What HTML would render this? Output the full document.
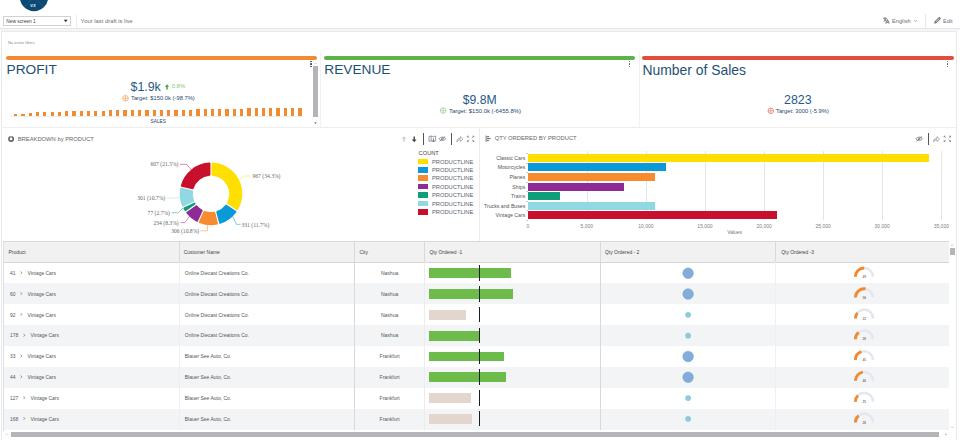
<!DOCTYPE html><html><head><meta charset="utf-8"><style>
*{margin:0;padding:0;box-sizing:border-box}
html,body{width:960px;height:440px;overflow:hidden;background:#fff;font-family:"Liberation Sans", sans-serif;}
.abs{position:absolute}
.t{position:absolute;white-space:nowrap;line-height:1}
svg{position:absolute;overflow:visible}
</style></head><body>
<svg style="left:0;top:0" width="960" height="440"><circle cx="34" cy="-3" r="14.2" fill="#0c4a73"/><line x1="24" y1="-13" x2="44" y2="7" stroke="#2f6f9c" stroke-width="0.4"/><line x1="44" y1="-13" x2="24" y2="7" stroke="#2f6f9c" stroke-width="0.4"/></svg><div class="t" style="left:30.3px;top:4.70px;font-size:3.6px;color:#fff;font-weight:bold">V.X</div><div class="abs" style="left:2.5px;top:16.2px;width:68.3px;height:9.6px;border:0.8px solid #d2d2d2;background:#fff"></div><div class="t" style="left:6.2px;top:19.89px;font-size:4.85px;color:#444;">New screen 1</div><svg style="left:0;top:0" width="960" height="440"><path d="M63.8,19.8 L67.6,19.8 L65.7,22 Z" fill="#222"/></svg><div class="abs" style="left:76.30px;top:15.00px;width:0.80px;height:13.00px;background:#ececec;"></div><div class="t" style="left:80.8px;top:18.71px;font-size:5.85px;color:#737373;">Your last draft is live</div><svg style="left:0;top:0" width="960" height="440"><g stroke="#555" stroke-width="0.8" fill="none"><path d="M883.2,18.3 H886.6 M884.9,17.6 V18.3 M883.6,21.6 C885,20.6 886,19.6 886.2,18.3 M884.4,19.4 C884.9,20.4 885.6,21.1 886.4,21.6"/><path d="M885.8,23.6 L887.5,19.6 L889.2,23.6 M886.5,22.3 H888.5"/></g></svg><div class="t" style="left:892px;top:18.92px;font-size:5.7px;color:#707070;">English</div><svg style="left:0;top:0" width="960" height="440"><path d="M914.2,20.2 L915.7,21.6 L917.2,20.2" stroke="#777" stroke-width="0.6" fill="none"/></svg><div class="abs" style="left:925.30px;top:14.00px;width:0.80px;height:14.00px;background:#e8e8e8;"></div><svg style="left:0;top:0" width="960" height="440"><path d="M934.2,23.8 L934.8,21.2 L939.2,16.8 L941,18.6 L936.6,23 Z" fill="#6a6a6a"/><path d="M935.6,21.6 L939.2,18 L939.8,18.6 L936.2,22.2 Z" fill="#fff" opacity="0.7"/></svg><div class="t" style="left:943px;top:18.69px;font-size:5.6px;color:#707070;">Edit</div><div class="abs" style="left:0.00px;top:28.00px;width:960.00px;height:0.80px;background:#e6e6e6;"></div><div class="abs" style="left:0.00px;top:28.80px;width:960.00px;height:2.40px;background:#f6f6f6;"></div><div class="abs" style="left:0.8px;top:31px;width:956.2px;height:420px;border:1px solid #e6eaee;background:#fff"></div><div class="t" style="left:8px;top:41.20px;font-size:3.9px;color:#8a8a8a;">No active filters</div><div class="abs" style="left:5.50px;top:55.60px;width:311.80px;height:4.10px;background:#f28a33;border-radius:2.05px"></div><div class="t" style="left:6.6px;top:63.10px;font-size:13.7px;color:#1e5075;">PROFIT</div><div class="abs" style="left:323.80px;top:55.60px;width:311.40px;height:4.10px;background:#5cb449;border-radius:2.05px"></div><div class="t" style="left:324.3px;top:63.10px;font-size:13.7px;color:#1e5075;">REVENUE</div><div class="abs" style="left:642.10px;top:55.60px;width:311.70px;height:4.10px;background:#e24e3a;border-radius:2.05px"></div><div class="t" style="left:642.5px;top:63.66px;font-size:13.9px;color:#1e5075;">Number of Sales</div><div class="abs" style="left:320.30px;top:52.00px;width:0.90px;height:75.50px;background:#f2f2f2;"></div><div class="abs" style="left:638.60px;top:52.00px;width:0.90px;height:75.50px;background:#f2f2f2;"></div><div class="abs" style="left:310.40px;top:61.30px;width:1.20px;height:1.20px;background:#555;border-radius:50%"></div><div class="abs" style="left:310.40px;top:63.40px;width:1.20px;height:1.20px;background:#555;border-radius:50%"></div><div class="abs" style="left:310.40px;top:65.50px;width:1.20px;height:1.20px;background:#555;border-radius:50%"></div><div class="abs" style="left:628.80px;top:61.30px;width:1.20px;height:1.20px;background:#555;border-radius:50%"></div><div class="abs" style="left:628.80px;top:63.40px;width:1.20px;height:1.20px;background:#555;border-radius:50%"></div><div class="abs" style="left:628.80px;top:65.50px;width:1.20px;height:1.20px;background:#555;border-radius:50%"></div><div class="abs" style="left:946.90px;top:61.30px;width:1.20px;height:1.20px;background:#555;border-radius:50%"></div><div class="abs" style="left:946.90px;top:63.40px;width:1.20px;height:1.20px;background:#555;border-radius:50%"></div><div class="abs" style="left:946.90px;top:65.50px;width:1.20px;height:1.20px;background:#555;border-radius:50%"></div><div class="abs" style="left:313.00px;top:66.40px;width:5.00px;height:50.20px;background:#b3b5b9;"></div><svg style="left:0;top:0" width="960" height="440"><path d="M314.3,64 L315.5,62.8 L316.7,64" stroke="#aaa" stroke-width="0.5" fill="none"/><path d="M314.2,122.4 L316.8,122.4 L315.5,123.9 Z" fill="#555"/></svg><div class="t" style="left:130.5px;top:81.20px;font-size:12.4px;color:#1f5a85;">$1.9k</div><svg style="left:0;top:0" width="960" height="440"><path d="M167,84.2 L169.2,86.8 L167.8,86.8 L167.8,89.6 L166.2,89.6 L166.2,86.8 L164.8,86.8 Z" fill="#45a945"/></svg><div class="t" style="left:171.7px;top:84.41px;font-size:5.9px;color:#82c771;">0.8%</div><svg style="left:0;top:0" width="960" height="440"><g stroke="#f28a33" fill="none" opacity="0.9"><circle cx="125.5" cy="98.3" r="2.8" stroke-width="0.65"/><line x1="125.5" y1="95.5" x2="125.5" y2="101.1" stroke-width="0.55"/><line x1="122.7" y1="98.3" x2="128.3" y2="98.3" stroke-width="0.55"/></g></svg><div class="t" style="left:131px;top:96.39px;font-size:5.81px;color:#27496d;">Target: $150.0k (-98.7%)</div><div class="t" style="left:462.7px;top:93.50px;font-size:12.2px;color:#1f5a85;">$9.8M</div><svg style="left:0;top:0" width="960" height="440"><g stroke="#7cc46a" fill="none" opacity="0.9"><circle cx="443.1" cy="110.6" r="2.8" stroke-width="0.65"/><line x1="443.1" y1="107.8" x2="443.1" y2="113.39999999999999" stroke-width="0.55"/><line x1="440.3" y1="110.6" x2="445.90000000000003" y2="110.6" stroke-width="0.55"/></g></svg><div class="t" style="left:449px;top:108.91px;font-size:5.94px;color:#27496d;">Target: $150.0k (-6455.8%)</div><div class="t" style="left:784px;top:93.60px;font-size:12.4px;color:#1f5a85;">2823</div><svg style="left:0;top:0" width="960" height="440"><g stroke="#e24e3a" fill="none" opacity="0.9"><circle cx="770.8" cy="110.8" r="2.8" stroke-width="0.65"/><line x1="770.8" y1="108.0" x2="770.8" y2="113.6" stroke-width="0.55"/><line x1="768.0" y1="110.8" x2="773.5999999999999" y2="110.8" stroke-width="0.55"/></g></svg><div class="t" style="left:776px;top:108.89px;font-size:5.8px;color:#27496d;">Target: 3000 (-5.9%)</div><div class="abs" style="left:14.15px;top:113.80px;width:3.20px;height:2.00px;background:#f28a33;"></div><div class="abs" style="left:21.44px;top:113.80px;width:3.20px;height:2.00px;background:#f28a33;"></div><div class="abs" style="left:28.72px;top:113.30px;width:3.20px;height:2.50px;background:#f28a33;"></div><div class="abs" style="left:36.01px;top:112.10px;width:3.20px;height:3.70px;background:#f28a33;"></div><div class="abs" style="left:43.30px;top:112.10px;width:3.20px;height:3.70px;background:#f28a33;"></div><div class="abs" style="left:50.59px;top:112.10px;width:3.20px;height:3.70px;background:#f28a33;"></div><div class="abs" style="left:57.87px;top:112.10px;width:3.20px;height:3.70px;background:#f28a33;"></div><div class="abs" style="left:65.16px;top:111.30px;width:3.20px;height:4.50px;background:#f28a33;"></div><div class="abs" style="left:72.45px;top:111.30px;width:3.20px;height:4.50px;background:#f28a33;"></div><div class="abs" style="left:79.73px;top:111.30px;width:3.20px;height:4.50px;background:#f28a33;"></div><div class="abs" style="left:87.02px;top:111.20px;width:3.20px;height:4.60px;background:#f28a33;"></div><div class="abs" style="left:94.31px;top:110.80px;width:3.20px;height:5.00px;background:#f28a33;"></div><div class="abs" style="left:101.60px;top:110.80px;width:3.20px;height:5.00px;background:#f28a33;"></div><div class="abs" style="left:108.88px;top:110.30px;width:3.20px;height:5.50px;background:#f28a33;"></div><div class="abs" style="left:116.17px;top:110.30px;width:3.20px;height:5.50px;background:#f28a33;"></div><div class="abs" style="left:123.46px;top:110.30px;width:3.20px;height:5.50px;background:#f28a33;"></div><div class="abs" style="left:130.74px;top:110.20px;width:3.20px;height:5.60px;background:#f28a33;"></div><div class="abs" style="left:138.03px;top:110.00px;width:3.20px;height:5.80px;background:#f28a33;"></div><div class="abs" style="left:145.32px;top:110.00px;width:3.20px;height:5.80px;background:#f28a33;"></div><div class="abs" style="left:152.61px;top:110.00px;width:3.20px;height:5.80px;background:#f28a33;"></div><div class="abs" style="left:159.89px;top:110.20px;width:3.20px;height:5.60px;background:#f28a33;"></div><div class="abs" style="left:167.18px;top:110.06px;width:3.20px;height:5.74px;background:#f28a33;"></div><div class="abs" style="left:174.47px;top:109.92px;width:3.20px;height:5.88px;background:#f28a33;"></div><div class="abs" style="left:181.76px;top:109.77px;width:3.20px;height:6.03px;background:#f28a33;"></div><div class="abs" style="left:189.04px;top:109.63px;width:3.20px;height:6.17px;background:#f28a33;"></div><div class="abs" style="left:196.33px;top:109.49px;width:3.20px;height:6.31px;background:#f28a33;"></div><div class="abs" style="left:203.62px;top:109.35px;width:3.20px;height:6.45px;background:#f28a33;"></div><div class="abs" style="left:210.90px;top:109.21px;width:3.20px;height:6.59px;background:#f28a33;"></div><div class="abs" style="left:218.19px;top:109.06px;width:3.20px;height:6.74px;background:#f28a33;"></div><div class="abs" style="left:225.48px;top:108.92px;width:3.20px;height:6.88px;background:#f28a33;"></div><div class="abs" style="left:232.77px;top:108.78px;width:3.20px;height:7.02px;background:#f28a33;"></div><div class="abs" style="left:240.05px;top:108.64px;width:3.20px;height:7.16px;background:#f28a33;"></div><div class="abs" style="left:247.34px;top:108.49px;width:3.20px;height:7.31px;background:#f28a33;"></div><div class="abs" style="left:254.63px;top:108.35px;width:3.20px;height:7.45px;background:#f28a33;"></div><div class="abs" style="left:261.91px;top:108.21px;width:3.20px;height:7.59px;background:#f28a33;"></div><div class="abs" style="left:269.20px;top:108.07px;width:3.20px;height:7.73px;background:#f28a33;"></div><div class="abs" style="left:276.49px;top:107.93px;width:3.20px;height:7.87px;background:#f28a33;"></div><div class="abs" style="left:283.78px;top:107.78px;width:3.20px;height:8.02px;background:#f28a33;"></div><div class="abs" style="left:291.06px;top:107.64px;width:3.20px;height:8.16px;background:#f28a33;"></div><div class="abs" style="left:298.35px;top:107.50px;width:3.20px;height:8.30px;background:#f28a33;"></div><div class="abs" style="left:10.00px;top:115.80px;width:293.00px;height:0.60px;background:#ececec;"></div><div class="t" style="left:150.5px;top:119.91px;font-size:4.8px;color:#27496d;">SALES</div><div class="abs" style="left:1.00px;top:127.40px;width:956.00px;height:1.00px;background:#eeeeee;"></div><div class="abs" style="left:479.40px;top:128.00px;width:0.90px;height:112.50px;background:#ececec;"></div><svg style="left:0;top:0" width="960" height="440"><g><circle cx="11.1" cy="138.9" r="2.2" fill="none" stroke="#666" stroke-width="1.6"/><line x1="11.1" y1="135.8" x2="11.1" y2="137.4" stroke="#fff" stroke-width="0.7"/></g></svg><div class="t" style="left:17.7px;top:137.02px;font-size:5.82px;color:#666;">BREAKDOWN by PRODUCT</div><svg style="left:0;top:0" width="960" height="440"><path d="M212.45,163.48 A30.400000000000002,30.400000000000002 0 0 1 237.17,209.32 L227.71,203.10 A19.099999999999998,19.099999999999998 0 0 0 212.45,174.81 Z" fill="#ffdf00" stroke="#ffdf00" stroke-width="1.8" stroke-linejoin="round"/><path d="M235.58,211.74 A30.400000000000002,30.400000000000002 0 0 1 219.99,222.89 L217.16,211.93 A19.099999999999998,19.099999999999998 0 0 0 226.12,205.52 Z" fill="#0b9ad8" stroke="#0b9ad8" stroke-width="1.8" stroke-linejoin="round"/><path d="M217.19,223.61 A30.400000000000002,30.400000000000002 0 0 1 199.70,222.07 L204.41,211.78 A19.099999999999998,19.099999999999998 0 0 0 214.36,212.65 Z" fill="#f78b2d" stroke="#f78b2d" stroke-width="1.8" stroke-linejoin="round"/><path d="M197.07,220.87 A30.400000000000002,30.400000000000002 0 0 1 187.16,212.71 L196.36,206.12 A19.099999999999998,19.099999999999998 0 0 0 201.77,210.57 Z" fill="#8e2b96" stroke="#8e2b96" stroke-width="1.8" stroke-linejoin="round"/><path d="M185.47,210.35 A30.400000000000002,30.400000000000002 0 0 1 184.29,208.37 L194.48,203.44 A19.099999999999998,19.099999999999998 0 0 0 194.67,203.76 Z" fill="#0f9e7b" stroke="#0f9e7b" stroke-width="1.8" stroke-linejoin="round"/><path d="M183.03,205.76 A30.400000000000002,30.400000000000002 0 0 1 181.05,188.64 L192.10,191.11 A19.099999999999998,19.099999999999998 0 0 0 193.22,200.83 Z" fill="#90d9e2" stroke="#90d9e2" stroke-width="1.8" stroke-linejoin="round"/><path d="M181.68,185.81 A30.400000000000002,30.400000000000002 0 0 1 209.55,163.48 L209.55,174.81 A19.099999999999998,19.099999999999998 0 0 0 192.73,188.28 Z" fill="#c8102e" stroke="#c8102e" stroke-width="1.8" stroke-linejoin="round"/><g fill="none" stroke-width="0.5"><polyline points="238.5,180.5 243.5,176 250.5,176" stroke="#ffdf00"/><polyline points="232,215 236.5,224.4 240.5,224.4" stroke="#0b9ad8"/><polyline points="207.5,225 207.5,230.8 200.5,230.8" stroke="#f78b2d"/><polyline points="190,215.5 185,222.6 180.5,222.6" stroke="#8e2b96"/><polyline points="183,208 178,212.8 171.5,212.8" stroke="#0f9e7b"/><polyline points="180,197 177,198 166.5,198" stroke="#90d9e2"/><polyline points="191.5,170 186.5,164.3 180,164.3" stroke="#c8102e"/></g></svg><div class="t" style="left:252.5px;top:173.98px;font-size:5.6px;color:#666;font-family:'Liberation Serif', serif">967 (34.3%)</div><div class="t" style="left:241.5px;top:222.58px;font-size:5.6px;color:#666;font-family:'Liberation Serif', serif">331 (11.7%)</div><div class="t" style="left:171.2px;top:228.98px;font-size:5.6px;color:#666;font-family:'Liberation Serif', serif">306 (10.8%)</div><div class="t" style="left:153.5px;top:220.78px;font-size:5.6px;color:#666;font-family:'Liberation Serif', serif">234 (8.3%)</div><div class="t" style="left:147.6px;top:210.98px;font-size:5.6px;color:#666;font-family:'Liberation Serif', serif">77 (2.7%)</div><div class="t" style="left:137.2px;top:196.18px;font-size:5.6px;color:#666;font-family:'Liberation Serif', serif">301 (10.7%)</div><div class="t" style="left:150.5px;top:162.48px;font-size:5.6px;color:#666;font-family:'Liberation Serif', serif">607 (21.5%)</div><svg style="left:0;top:0" width="960" height="440"><path d="M404,136.2 L406.3,138.8 L404.7,138.8 L404.7,141.8 L403.3,141.8 L403.3,138.8 L401.7,138.8 Z" fill="#cfcfcf"/><path d="M414.2,142.2 L416.6,139.5 L414.9,139.5 L414.9,136.4 L413.5,136.4 L413.5,139.5 L411.8,139.5 Z" fill="#454545"/></svg><div class="abs" style="left:422.90px;top:133.20px;width:0.90px;height:12.30px;background:#555;"></div><svg style="left:0;top:0" width="960" height="440"><g fill="none" stroke="#687888" stroke-width="0.7"><path d="M429,136.6 L431.2,136 L433.4,136.6 L435.6,136 V140.8 L433.4,141.4 L431.2,140.8 L429,141.4 Z M431.2,136 V140.8"/></g><path d="M433.4,138.2 V141.6 M432.3,140.6 L433.4,141.8 L434.5,140.6" stroke="#4a5560" stroke-width="0.7" fill="none"/></svg><svg style="left:0;top:0" width="960" height="440"><g fill="none" stroke="#6b6f78" stroke-width="0.7"><path d="M439.0,138.8 C440.4,136.60000000000002 444.4,136.60000000000002 445.79999999999995,138.8 C444.4,141.0 440.4,141.0 439.0,138.8 Z"/><circle cx="442.4" cy="138.8" r="0.9"/><line x1="439.59999999999997" y1="141.20000000000002" x2="445.2" y2="136.4"/></g></svg><div class="abs" style="left:451.10px;top:133.20px;width:0.90px;height:12.30px;background:#555;"></div><svg style="left:0;top:0" width="960" height="440"><g fill="none" stroke="#777" stroke-width="0.6"><path d="M456.9,141.8 C456.9,139.2 458.5,138.3 460.29999999999995,138.3 V136.6 L462.9,139.1 L460.29999999999995,141.4 V139.8 C458.7,139.8 457.5,140.4 456.9,141.8 Z"/></g><g fill="none" stroke="#6a7280" stroke-width="0.7"><path d="M467.40000000000003,136.1 L469.20000000000005,137.9 M467.40000000000003,136.1 V137.3 M467.40000000000003,136.1 H468.6"/><path d="M473.8,136.1 L472.0,137.9 M473.8,136.1 V137.3 M473.8,136.1 H472.6"/><path d="M467.40000000000003,141.5 L469.20000000000005,139.7 M467.40000000000003,141.5 V140.3 M467.40000000000003,141.5 H468.6"/><path d="M473.8,141.5 L472.0,139.7 M473.8,141.5 V140.3 M473.8,141.5 H472.6"/></g></svg><div class="t" style="left:418.6px;top:150.52px;font-size:5.7px;color:#444;">COUNT</div><div class="abs" style="left:418.40px;top:158.70px;width:10.00px;height:5.60px;background:#ffdf00;"></div><div class="t" style="left:432px;top:159.71px;font-size:5.76px;color:#5b6270;">PRODUCTLINE</div><div class="abs" style="left:418.40px;top:167.08px;width:10.00px;height:5.60px;background:#0b9ad8;"></div><div class="t" style="left:432px;top:168.09px;font-size:5.76px;color:#5b6270;">PRODUCTLINE</div><div class="abs" style="left:418.40px;top:175.46px;width:10.00px;height:5.60px;background:#f78b2d;"></div><div class="t" style="left:432px;top:176.47px;font-size:5.76px;color:#5b6270;">PRODUCTLINE</div><div class="abs" style="left:418.40px;top:183.84px;width:10.00px;height:5.60px;background:#8e2b96;"></div><div class="t" style="left:432px;top:184.85px;font-size:5.76px;color:#5b6270;">PRODUCTLINE</div><div class="abs" style="left:418.40px;top:192.22px;width:10.00px;height:5.60px;background:#0f9e7b;"></div><div class="t" style="left:432px;top:193.23px;font-size:5.76px;color:#5b6270;">PRODUCTLINE</div><div class="abs" style="left:418.40px;top:200.60px;width:10.00px;height:5.60px;background:#90d9e2;"></div><div class="t" style="left:432px;top:201.61px;font-size:5.76px;color:#5b6270;">PRODUCTLINE</div><div class="abs" style="left:418.40px;top:208.98px;width:10.00px;height:5.60px;background:#c8102e;"></div><div class="t" style="left:432px;top:209.99px;font-size:5.76px;color:#5b6270;">PRODUCTLINE</div><svg style="left:0;top:0" width="960" height="440"><g fill="#777"><rect x="485.6" y="135.6" width="1" height="6.2"/><rect x="486.8" y="136" width="2.4" height="1.2"/><rect x="486.8" y="138" width="3.8" height="1.2"/><rect x="486.8" y="140" width="2" height="1.2"/></g></svg><div class="t" style="left:494.7px;top:136.49px;font-size:5.81px;color:#666;">QTY ORDERED BY PRODUCT</div><div class="abs" style="left:586.57px;top:151.00px;width:0.70px;height:68.50px;background:#e2e5ea;"></div><div class="abs" style="left:645.64px;top:151.00px;width:0.70px;height:68.50px;background:#e2e5ea;"></div><div class="abs" style="left:704.71px;top:151.00px;width:0.70px;height:68.50px;background:#e2e5ea;"></div><div class="abs" style="left:763.79px;top:151.00px;width:0.70px;height:68.50px;background:#e2e5ea;"></div><div class="abs" style="left:822.86px;top:151.00px;width:0.70px;height:68.50px;background:#e2e5ea;"></div><div class="abs" style="left:881.93px;top:151.00px;width:0.70px;height:68.50px;background:#e2e5ea;"></div><div class="abs" style="left:941.00px;top:151.00px;width:0.70px;height:68.50px;background:#e2e5ea;"></div><div class="abs" style="left:527.80px;top:153.90px;width:401.59px;height:8.00px;background:#ffdf00;"></div><div class="t" style="right:434.70px;top:155.79px;font-size:5.2px;color:#555;">Classic Cars</div><div class="abs" style="left:527.80px;top:163.47px;width:137.79px;height:8.00px;background:#0b9ad8;"></div><div class="t" style="right:434.70px;top:165.36px;font-size:5.2px;color:#555;">Motorcycles</div><div class="abs" style="left:527.80px;top:173.04px;width:126.73px;height:8.00px;background:#f78b2d;"></div><div class="t" style="right:434.70px;top:174.93px;font-size:5.2px;color:#555;">Planes</div><div class="abs" style="left:527.80px;top:182.61px;width:96.01px;height:8.00px;background:#8e2b96;"></div><div class="t" style="right:434.70px;top:184.50px;font-size:5.2px;color:#555;">Ships</div><div class="abs" style="left:527.80px;top:192.18px;width:32.04px;height:8.00px;background:#0f9e7b;"></div><div class="t" style="right:434.70px;top:194.07px;font-size:5.2px;color:#555;">Trains</div><div class="abs" style="left:527.80px;top:201.75px;width:127.32px;height:8.00px;background:#90d9e2;"></div><div class="t" style="right:434.70px;top:203.64px;font-size:5.2px;color:#555;">Trucks and Buses</div><div class="abs" style="left:527.80px;top:211.32px;width:248.92px;height:8.00px;background:#c8102e;"></div><div class="t" style="right:434.70px;top:213.21px;font-size:5.2px;color:#555;">Vintage Cars</div><div class="abs" style="left:526.00px;top:153.00px;width:1.60px;height:0.50px;background:#ccc;"></div><div class="abs" style="left:526.00px;top:162.57px;width:1.60px;height:0.50px;background:#ccc;"></div><div class="abs" style="left:526.00px;top:172.14px;width:1.60px;height:0.50px;background:#ccc;"></div><div class="abs" style="left:526.00px;top:181.71px;width:1.60px;height:0.50px;background:#ccc;"></div><div class="abs" style="left:526.00px;top:191.28px;width:1.60px;height:0.50px;background:#ccc;"></div><div class="abs" style="left:526.00px;top:200.85px;width:1.60px;height:0.50px;background:#ccc;"></div><div class="abs" style="left:526.00px;top:210.42px;width:1.60px;height:0.50px;background:#ccc;"></div><div class="abs" style="left:526.00px;top:219.99px;width:1.60px;height:0.50px;background:#ccc;"></div><div class="t" style="left:527.8px;top:223.71px;font-size:5.0px;color:#808080;transform:translateX(-50%);">0</div><div class="t" style="left:586.8714285714285px;top:223.71px;font-size:5.0px;color:#808080;transform:translateX(-50%);">5,000</div><div class="t" style="left:645.9428571428571px;top:223.71px;font-size:5.0px;color:#808080;transform:translateX(-50%);">10,000</div><div class="t" style="left:705.0142857142857px;top:223.71px;font-size:5.0px;color:#808080;transform:translateX(-50%);">15,000</div><div class="t" style="left:764.0857142857143px;top:223.71px;font-size:5.0px;color:#808080;transform:translateX(-50%);">20,000</div><div class="t" style="left:823.1571428571428px;top:223.71px;font-size:5.0px;color:#808080;transform:translateX(-50%);">25,000</div><div class="t" style="left:882.2285714285714px;top:223.71px;font-size:5.0px;color:#808080;transform:translateX(-50%);">30,000</div><div class="t" style="left:941.3px;top:223.71px;font-size:5.0px;color:#808080;transform:translateX(-50%);">35,000</div><div class="t" style="left:727.2px;top:229.71px;font-size:5.0px;color:#777;">Values</div><svg style="left:0;top:0" width="960" height="440"><g fill="none" stroke="#6b6f78" stroke-width="0.7"><path d="M915.8000000000001,138.8 C917.2,136.60000000000002 921.2,136.60000000000002 922.6,138.8 C921.2,141.0 917.2,141.0 915.8000000000001,138.8 Z"/><circle cx="919.2" cy="138.8" r="0.9"/><line x1="916.4000000000001" y1="141.20000000000002" x2="922.0" y2="136.4"/></g></svg><div class="abs" style="left:928.30px;top:133.20px;width:0.90px;height:12.30px;background:#555;"></div><svg style="left:0;top:0" width="960" height="440"><g fill="none" stroke="#777" stroke-width="0.6"><path d="M933.6,141.8 C933.6,139.2 935.2,138.3 937.0,138.3 V136.6 L939.6,139.1 L937.0,141.4 V139.8 C935.4,139.8 934.2,140.4 933.6,141.8 Z"/></g><g fill="none" stroke="#6a7280" stroke-width="0.7"><path d="M944.0999999999999,136.1 L945.9,137.9 M944.0999999999999,136.1 V137.3 M944.0999999999999,136.1 H945.3"/><path d="M950.5,136.1 L948.6999999999999,137.9 M950.5,136.1 V137.3 M950.5,136.1 H949.3"/><path d="M944.0999999999999,141.5 L945.9,139.7 M944.0999999999999,141.5 V140.3 M944.0999999999999,141.5 H945.3"/><path d="M950.5,141.5 L948.6999999999999,139.7 M950.5,141.5 V140.3 M950.5,141.5 H949.3"/></g></svg><div class="abs" style="left:3.00px;top:241.00px;width:946.00px;height:21.00px;background:#f1f1f2;"></div><div class="abs" style="left:3.00px;top:241.00px;width:946.00px;height:0.90px;background:#d9d9d9;"></div><div class="abs" style="left:3.00px;top:261.60px;width:946.00px;height:0.90px;background:#d6d6d6;"></div><div class="abs" style="left:2.60px;top:241.00px;width:1.00px;height:190.00px;background:#dde1e5;"></div><div class="abs" style="left:3.50px;top:283.30px;width:945.50px;height:21.00px;background:#f3f4f6;"></div><div class="abs" style="left:3.50px;top:325.30px;width:945.50px;height:21.00px;background:#f3f4f6;"></div><div class="abs" style="left:3.50px;top:367.30px;width:945.50px;height:21.00px;background:#f3f4f6;"></div><div class="abs" style="left:3.50px;top:409.30px;width:945.50px;height:21.00px;background:#f3f4f6;"></div><div class="abs" style="left:178.80px;top:241.00px;width:0.80px;height:21.00px;background:#d9d9d9;"></div><div class="abs" style="left:178.80px;top:262.30px;width:0.80px;height:168.00px;background:#efeff1;"></div><div class="abs" style="left:354.10px;top:241.00px;width:0.80px;height:21.00px;background:#d9d9d9;"></div><div class="abs" style="left:354.10px;top:262.30px;width:0.80px;height:168.00px;background:#d9d9db;"></div><div class="abs" style="left:424.00px;top:241.00px;width:0.80px;height:21.00px;background:#d9d9d9;"></div><div class="abs" style="left:424.00px;top:262.30px;width:0.80px;height:168.00px;background:#ececee;"></div><div class="abs" style="left:600.10px;top:241.00px;width:0.80px;height:21.00px;background:#d9d9d9;"></div><div class="abs" style="left:600.10px;top:262.30px;width:0.80px;height:168.00px;background:#d9d9db;"></div><div class="abs" style="left:775.10px;top:241.00px;width:0.80px;height:21.00px;background:#d9d9d9;"></div><div class="abs" style="left:775.10px;top:262.30px;width:0.80px;height:168.00px;background:#efeff1;"></div><div class="t" style="left:8.5px;top:250.91px;font-size:4.95px;color:#444;">Product</div><div class="t" style="left:183.8px;top:250.91px;font-size:4.95px;color:#444;">Customer Name</div><div class="t" style="left:359.4px;top:250.91px;font-size:4.95px;color:#444;">City</div><div class="t" style="left:429.4px;top:250.91px;font-size:4.95px;color:#444;">Qty Ordered -1</div><div class="t" style="left:605px;top:250.91px;font-size:4.95px;color:#444;">Qty Ordered - 2</div><div class="t" style="left:781.2px;top:250.91px;font-size:4.95px;color:#444;">Qty Ordered -3</div><div class="t" style="left:10px;top:271.91px;font-size:4.95px;color:#555;">41</div><svg style="left:0;top:0" width="960" height="440"><path d="M20.6,271.40000000000003 L21.8,272.8 L20.6,274.2" stroke="#666" stroke-width="0.65" fill="none"/></svg><div class="t" style="left:27.5px;top:271.91px;font-size:4.95px;color:#555;">Vintage Cars</div><div class="t" style="left:184.8px;top:270.91px;font-size:4.99px;color:#555;">Online Diecast Creations Co.</div><div class="t" style="left:389.6px;top:270.91px;font-size:5.0px;color:#555;transform:translateX(-50%);">Nashua</div><div class="abs" style="left:429.20px;top:268.30px;width:81.80px;height:9.90px;background:#6cbb4b;"></div><div class="abs" style="left:478.60px;top:265.30px;width:1.70px;height:15.40px;background:#1d1d1d;"></div><svg style="left:0;top:0" width="960" height="440"><circle cx="688.1" cy="273.2" r="5.3" fill="#82acd9" stroke="#6f9bcc" stroke-width="0.5"/></svg><svg style="left:0;top:0" width="960" height="440"><path d="M855.4000000000001,276.8 A8.8,8.8 0 0 1 873.0,276.8" fill="none" stroke="#e4e7ef" stroke-width="2.6"/><path d="M855.4000000000001,276.8 A8.8,8.8 0 0 1 864.20,268.00" fill="none" stroke="#f08a32" stroke-width="2.9"/></svg><div class="t" style="left:864.2px;top:276.00px;font-size:3.2px;color:#333;transform:translateX(-50%);">49</div><div class="t" style="left:10px;top:292.72px;font-size:4.95px;color:#555;">60</div><svg style="left:0;top:0" width="960" height="440"><path d="M20.6,292.21000000000004 L21.8,293.61 L20.6,295.01" stroke="#666" stroke-width="0.65" fill="none"/></svg><div class="t" style="left:27.5px;top:292.72px;font-size:4.95px;color:#555;">Vintage Cars</div><div class="t" style="left:184.8px;top:291.72px;font-size:4.99px;color:#555;">Online Diecast Creations Co.</div><div class="t" style="left:389.6px;top:291.72px;font-size:5.0px;color:#555;transform:translateX(-50%);">Nashua</div><div class="abs" style="left:429.20px;top:289.11px;width:83.50px;height:9.90px;background:#6cbb4b;"></div><div class="abs" style="left:478.60px;top:286.11px;width:1.70px;height:15.40px;background:#1d1d1d;"></div><svg style="left:0;top:0" width="960" height="440"><circle cx="688.1" cy="294.01" r="5.3" fill="#82acd9" stroke="#6f9bcc" stroke-width="0.5"/></svg><svg style="left:0;top:0" width="960" height="440"><path d="M855.4000000000001,297.61 A8.8,8.8 0 0 1 873.0,297.61" fill="none" stroke="#e4e7ef" stroke-width="2.6"/><path d="M855.4000000000001,297.61 A8.8,8.8 0 0 1 865.58,288.92" fill="none" stroke="#f08a32" stroke-width="2.9"/></svg><div class="t" style="left:864.2px;top:296.81px;font-size:3.2px;color:#333;transform:translateX(-50%);">56</div><div class="t" style="left:10px;top:313.53px;font-size:4.95px;color:#555;">92</div><svg style="left:0;top:0" width="960" height="440"><path d="M20.6,313.02000000000004 L21.8,314.42 L20.6,315.82" stroke="#666" stroke-width="0.65" fill="none"/></svg><div class="t" style="left:27.5px;top:313.53px;font-size:4.95px;color:#555;">Vintage Cars</div><div class="t" style="left:184.8px;top:312.53px;font-size:4.99px;color:#555;">Online Diecast Creations Co.</div><div class="t" style="left:389.6px;top:312.53px;font-size:5.0px;color:#555;transform:translateX(-50%);">Nashua</div><div class="abs" style="left:429.20px;top:309.92px;width:36.50px;height:9.90px;background:#e2d6cf;"></div><div class="abs" style="left:478.60px;top:306.92px;width:1.70px;height:15.40px;background:#1d1d1d;"></div><svg style="left:0;top:0" width="960" height="440"><circle cx="688.1" cy="314.82" r="2.9" fill="#8ecbd8"/></svg><svg style="left:0;top:0" width="960" height="440"><path d="M855.4000000000001,318.42 A8.8,8.8 0 0 1 873.0,318.42" fill="none" stroke="#e4e7ef" stroke-width="2.6"/><path d="M855.4000000000001,318.42 A8.8,8.8 0 0 1 857.42,312.81" fill="none" stroke="#f08a32" stroke-width="2.9"/></svg><div class="t" style="left:864.2px;top:317.62px;font-size:3.2px;color:#333;transform:translateX(-50%);">22</div><div class="t" style="left:10px;top:334.34px;font-size:4.95px;color:#555;">178</div><svg style="left:0;top:0" width="960" height="440"><path d="M23.6,333.83000000000004 L24.8,335.23 L23.6,336.63" stroke="#666" stroke-width="0.65" fill="none"/></svg><div class="t" style="left:30.5px;top:334.34px;font-size:4.95px;color:#555;">Vintage Cars</div><div class="t" style="left:184.8px;top:333.34px;font-size:4.99px;color:#555;">Online Diecast Creations Co.</div><div class="t" style="left:389.6px;top:333.34px;font-size:5.0px;color:#555;transform:translateX(-50%);">Nashua</div><div class="abs" style="left:429.20px;top:330.73px;width:49.50px;height:9.90px;background:#6cbb4b;"></div><div class="abs" style="left:478.60px;top:327.73px;width:1.70px;height:15.40px;background:#1d1d1d;"></div><svg style="left:0;top:0" width="960" height="440"><circle cx="688.1" cy="335.63" r="2.9" fill="#8ecbd8"/></svg><svg style="left:0;top:0" width="960" height="440"><path d="M855.4000000000001,339.23 A8.8,8.8 0 0 1 873.0,339.23" fill="none" stroke="#e4e7ef" stroke-width="2.6"/><path d="M855.4000000000001,339.23 A8.8,8.8 0 0 1 858.59,332.45" fill="none" stroke="#f08a32" stroke-width="2.9"/></svg><div class="t" style="left:864.2px;top:338.43px;font-size:3.2px;color:#333;transform:translateX(-50%);">26</div><div class="t" style="left:10px;top:355.15px;font-size:4.95px;color:#555;">33</div><svg style="left:0;top:0" width="960" height="440"><path d="M20.6,354.64000000000004 L21.8,356.04 L20.6,357.44" stroke="#666" stroke-width="0.65" fill="none"/></svg><div class="t" style="left:27.5px;top:355.15px;font-size:4.95px;color:#555;">Vintage Cars</div><div class="t" style="left:184.8px;top:354.15px;font-size:4.99px;color:#555;">Blauer See Auto, Co.</div><div class="t" style="left:389.6px;top:354.15px;font-size:5.0px;color:#555;transform:translateX(-50%);">Frankfurt</div><div class="abs" style="left:429.20px;top:351.54px;width:74.50px;height:9.90px;background:#6cbb4b;"></div><div class="abs" style="left:478.60px;top:348.54px;width:1.70px;height:15.40px;background:#1d1d1d;"></div><svg style="left:0;top:0" width="960" height="440"><circle cx="688.1" cy="356.44" r="5.3" fill="#82acd9" stroke="#6f9bcc" stroke-width="0.5"/></svg><svg style="left:0;top:0" width="960" height="440"><path d="M855.4000000000001,360.04 A8.8,8.8 0 0 1 873.0,360.04" fill="none" stroke="#e4e7ef" stroke-width="2.6"/><path d="M855.4000000000001,360.04 A8.8,8.8 0 0 1 861.48,351.67" fill="none" stroke="#f08a32" stroke-width="2.9"/></svg><div class="t" style="left:864.2px;top:359.24px;font-size:3.2px;color:#333;transform:translateX(-50%);">45</div><div class="t" style="left:10px;top:375.96px;font-size:4.95px;color:#555;">44</div><svg style="left:0;top:0" width="960" height="440"><path d="M20.6,375.45000000000005 L21.8,376.85 L20.6,378.25" stroke="#666" stroke-width="0.65" fill="none"/></svg><div class="t" style="left:27.5px;top:375.96px;font-size:4.95px;color:#555;">Vintage Cars</div><div class="t" style="left:184.8px;top:374.96px;font-size:4.99px;color:#555;">Blauer See Auto, Co.</div><div class="t" style="left:389.6px;top:374.96px;font-size:5.0px;color:#555;transform:translateX(-50%);">Frankfurt</div><div class="abs" style="left:429.20px;top:372.35px;width:76.50px;height:9.90px;background:#6cbb4b;"></div><div class="abs" style="left:478.60px;top:369.35px;width:1.70px;height:15.40px;background:#1d1d1d;"></div><svg style="left:0;top:0" width="960" height="440"><circle cx="688.1" cy="377.25" r="5.3" fill="#82acd9" stroke="#6f9bcc" stroke-width="0.5"/></svg><svg style="left:0;top:0" width="960" height="440"><path d="M855.4000000000001,380.85 A8.8,8.8 0 0 1 873.0,380.85" fill="none" stroke="#e4e7ef" stroke-width="2.6"/><path d="M855.4000000000001,380.85 A8.8,8.8 0 0 1 862.82,372.16" fill="none" stroke="#f08a32" stroke-width="2.9"/></svg><div class="t" style="left:864.2px;top:380.05px;font-size:3.2px;color:#333;transform:translateX(-50%);">46</div><div class="t" style="left:10px;top:396.77px;font-size:4.95px;color:#555;">127</div><svg style="left:0;top:0" width="960" height="440"><path d="M23.6,396.26000000000005 L24.8,397.66 L23.6,399.06" stroke="#666" stroke-width="0.65" fill="none"/></svg><div class="t" style="left:30.5px;top:396.77px;font-size:4.95px;color:#555;">Vintage Cars</div><div class="t" style="left:184.8px;top:395.77px;font-size:4.99px;color:#555;">Blauer See Auto, Co.</div><div class="t" style="left:389.6px;top:395.77px;font-size:5.0px;color:#555;transform:translateX(-50%);">Frankfurt</div><div class="abs" style="left:429.20px;top:393.16px;width:41.50px;height:9.90px;background:#e2d6cf;"></div><div class="abs" style="left:478.60px;top:390.16px;width:1.70px;height:15.40px;background:#1d1d1d;"></div><svg style="left:0;top:0" width="960" height="440"><circle cx="688.1" cy="398.06" r="2.9" fill="#8ecbd8"/></svg><svg style="left:0;top:0" width="960" height="440"><path d="M855.4000000000001,401.66 A8.8,8.8 0 0 1 873.0,401.66" fill="none" stroke="#e4e7ef" stroke-width="2.6"/><path d="M855.4000000000001,401.66 A8.8,8.8 0 0 1 857.98,395.44" fill="none" stroke="#f08a32" stroke-width="2.9"/></svg><div class="t" style="left:864.2px;top:400.86px;font-size:3.2px;color:#333;transform:translateX(-50%);">25</div><div class="t" style="left:10px;top:417.58px;font-size:4.95px;color:#555;">168</div><svg style="left:0;top:0" width="960" height="440"><path d="M23.6,417.07000000000005 L24.8,418.47 L23.6,419.87" stroke="#666" stroke-width="0.65" fill="none"/></svg><div class="t" style="left:30.5px;top:417.58px;font-size:4.95px;color:#555;">Vintage Cars</div><div class="t" style="left:184.8px;top:416.58px;font-size:4.99px;color:#555;">Blauer See Auto, Co.</div><div class="t" style="left:389.6px;top:416.58px;font-size:5.0px;color:#555;transform:translateX(-50%);">Frankfurt</div><div class="abs" style="left:429.20px;top:413.97px;width:43.10px;height:9.90px;background:#e2d6cf;"></div><div class="abs" style="left:478.60px;top:410.97px;width:1.70px;height:15.40px;background:#1d1d1d;"></div><svg style="left:0;top:0" width="960" height="440"><circle cx="688.1" cy="418.87" r="2.9" fill="#8ecbd8"/></svg><svg style="left:0;top:0" width="960" height="440"><path d="M855.4000000000001,422.47 A8.8,8.8 0 0 1 873.0,422.47" fill="none" stroke="#e4e7ef" stroke-width="2.6"/><path d="M855.4000000000001,422.47 A8.8,8.8 0 0 1 858.59,415.69" fill="none" stroke="#f08a32" stroke-width="2.9"/></svg><div class="t" style="left:864.2px;top:421.67px;font-size:3.2px;color:#333;transform:translateX(-50%);">26</div><div class="abs" style="left:10.80px;top:432.00px;width:928.20px;height:4.80px;background:#b3b5b9;"></div><svg style="left:0;top:0" width="960" height="440"><path d="M7.4,433.2 L6.2,434.4 L7.4,435.6" stroke="#aaa" stroke-width="0.5" fill="none"/><path d="M945.4,433.2 L946.8,434.4 L945.4,435.6 Z" fill="#999"/><path d="M951,246 L952.3,244.7 L953.6,246" stroke="#999" stroke-width="0.5" fill="none"/><path d="M951,426.6 L952.3,427.9 L953.6,426.6" stroke="#999" stroke-width="0.5" fill="none"/></svg><div class="abs" style="left:950.00px;top:248.20px;width:4.80px;height:6.50px;background:#b3b5b9;"></div><div class="abs" style="left:956.20px;top:128.00px;width:0.80px;height:312.00px;background:#e6e9ed;"></div></body></html>
